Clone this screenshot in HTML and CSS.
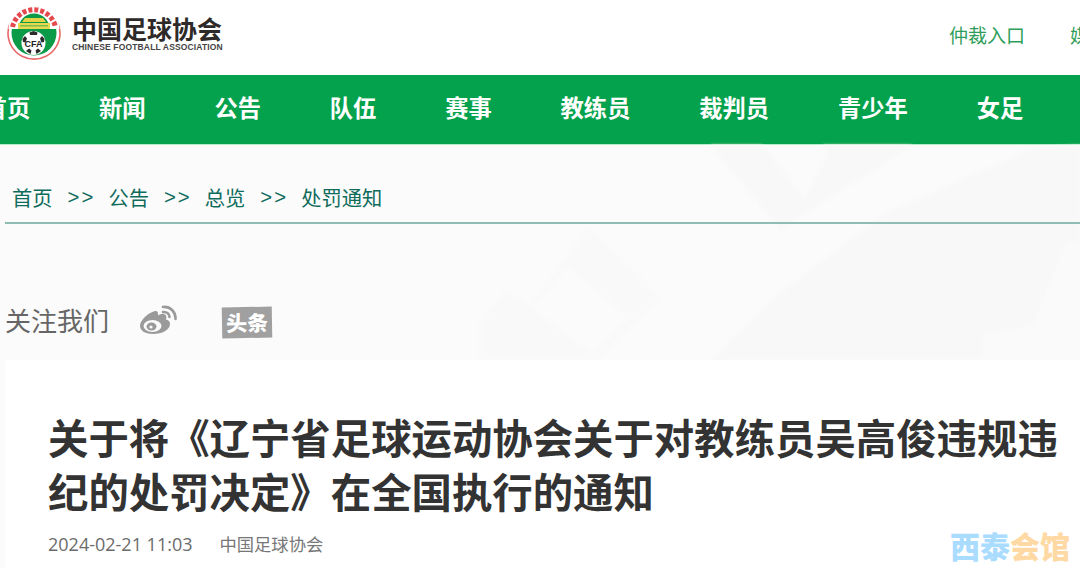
FILE: index.html
```html
<!DOCTYPE html>
<html lang="en">
<head>
  <meta charset="UTF-8">
  <title>中国足球协会</title>
  <link rel="stylesheet" href="styles.css">
</head>
<body>

  <header class="top">
    <a class="brand">
      <svg class="logo" viewBox="0 0 54 54" aria-hidden="true">
        <path d="M4 14A26 26 0 1 0 50 14" fill="none" stroke="#e9686a" stroke-width="1.600"/>
        <circle cx="27" cy="26" r="22.500" fill="#0b9a48"/>
        <path d="M6.500 22A20.500 20.500 0 0 1 47.500 22" fill="none" stroke="#fff" stroke-width="10"/>
        <path d="M5.500 20A22 22 0 0 1 48.500 20" fill="none" stroke="#e5484d" stroke-width="5" stroke-dasharray="4 2"/>
        <path d="M18 11h18l3 4H15z" fill="#e6d245"/>
        <path d="M11 16h32v6H11z" fill="#e6d84f"/>
        <path d="M13 18h28v1.500H13z" fill="#7ebc4c"/>
        <circle cx="26.500" cy="36" r="12" fill="#fff"/>
        <path d="M26.500 24l4 1.500-.5 2.500h-7l-.5-2.500zM15.500 32l2.500-3 2 2.500-1.500 4-2.500-.5zM37.500 32l-2.500-3-2 2.500 1.500 4 2.500-.5zM19 44l3-2.500 2.500 2-1 3.500zM34 44l-3-2.500-2.500 2 1 3.500z" fill="#2b2b2b"/>
        <text x="26.500" y="40" class="logo-cfa">CFA</text>
      </svg>
      <span class="brand-text">
        <span class="brand-cn">中国足球协会</span>
        <span class="brand-en">CHINESE FOOTBALL ASSOCIATION</span>
      </span>
    </a>
    <nav class="top-links">
      <a>仲裁入口</a>
      <a>媒体入口</a>
    </nav>
  </header>

  <nav class="main-nav">
    <a>首页</a>
    <a>新闻</a>
    <a>公告</a>
    <a>队伍</a>
    <a>赛事</a>
    <a>教练员</a>
    <a>裁判员</a>
    <a>青少年</a>
    <a>女足</a>
  </nav>

  <main class="content">
    <svg class="bg-shapes" viewBox="0 0 1080 423" aria-hidden="true">
      <path d="M710 215L777 150L887 67L1033 3L1080 0V215z" fill="#f8f8f8"/>
      <path d="M1067 97L1033 180L983 190L983 215H1080V97z" fill="#fafafa"/>
      <path d="M710 0L780 85L913 0H823L827 10L805 53L762 0z" fill="#f8f8f8"/>
      <path d="M588 82L662 152L597 215H480V177L505 145L530 160zM567 122L533 163L593 210L627 173z" fill="#f9f9f9" fill-rule="evenodd"/>
    </svg>

    <div class="crumbs">
      <a>首页</a><span>&gt;&gt;</span>
      <a>公告</a><span>&gt;&gt;</span>
      <a>总览</a><span>&gt;&gt;</span>
      <a>处罚通知</a>
    </div>

    <div class="follow">
      <span>关注我们</span>
      <svg class="weibo" viewBox="0 0 38 32" aria-hidden="true">
        <path d="M15 6C8 8 0 15 0 21c0 5 6 8 13 8 9 0 17-4 17-10 0-3-2-4-4-4.500 1-3 0-5-2-5.500-2-.5-4 .5-6 1.500 .5-3-.5-5-3-4.500z" fill="#9a9a9a"/>
        <ellipse cx="12.500" cy="21" rx="9" ry="6" fill="#fbfbfb"/>
        <ellipse cx="11.500" cy="21.500" rx="5" ry="4" fill="#9a9a9a"/>
        <circle cx="11" cy="22" r="1.600" fill="#fbfbfb"/>
        <path d="M23 7c4-.5 6.500 2 6.500 5M23 2c7-1 13 5 12.500 12" fill="none" stroke="#9a9a9a" stroke-width="2.600" stroke-linecap="round"/>
      </svg>
      <span class="toutiao">头条</span>
    </div>

    <article class="card">
      <h1>关于将《辽宁省足球运动协会关于对教练员吴高俊违规违纪的处罚决定》在全国执行的通知</h1>
      <div class="meta">
        <span class="meta-date">2024-02-21 11:03</span>
        <span>中国足球协会</span>
      </div>
    </article>
  </main>

  <div class="watermark"><span class="wm-blue">西泰</span><span class="wm-orange">会馆</span></div>

</body>
</html>
```

FILE: styles.css
```css
html, body {
  height: 100%;
}

body {
  margin: 0;
  background: #fff;
  font-family: "Noto Sans CJK SC", "Liberation Sans", sans-serif;
  overflow: hidden;
}

.top {
  height: 75px;
  display: flex;
  align-items: center;
  padding-left: 7px;
  background: #fff;
}

.brand {
  display: flex;
  align-items: flex-start;
  gap: 11px;
  width: 216px;
  flex-shrink: 0;
  margin-top: -7px;
}

.logo {
  width: 54px;
  height: 54px;
  flex-shrink: 0;
}

.logo-cfa {
  font: bold 9px "Liberation Sans", sans-serif;
  fill: #222;
  text-anchor: middle;
}

.brand-text {
  display: flex;
  flex-direction: column;
  margin-top: 7px;
}

.brand-cn {
  font-size: 25px;
  line-height: 28px;
  font-weight: 700;
  color: #2e2a2a;
  white-space: nowrap;
}

.brand-en {
  font: bold 8.500px/10px "Liberation Sans", sans-serif;
  letter-spacing: 0.150px;
  color: #444;
  white-space: nowrap;
}

.top-links {
  display: flex;
  gap: 45px;
  margin-left: 726px;
  padding-bottom: 6px;
  flex-shrink: 0;
  font-size: 19px;
  color: #2f9e5b;
  white-space: nowrap;
}

.main-nav {
  height: 70px;
  display: flex;
  align-items: center;
  gap: 68.800px;
  margin-left: -16.400px;
  padding-bottom: 5px;
  box-sizing: border-box;
  background: #04a24c;
  border-bottom: 1px solid #b5ecca;
  font-size: 23.300px;
  font-weight: 700;
  color: #fff;
  white-space: nowrap;
}

.content {
  position: relative;
  height: 423px;
  background: #fbfbfb;
  padding-left: 5px;
}

.bg-shapes {
  position: absolute;
  left: 0;
  top: 0;
  width: 1080px;
  height: 423px;
  filter: blur(1.500px);
}

.crumbs {
  position: relative;
  height: 79px;
  display: flex;
  align-items: center;
  gap: 15px;
  padding: 27px 0 0 7px;
  box-sizing: border-box;
  border-bottom: 2px solid #8fbdb3;
  font-size: 20.300px;
  color: #0f6b5c;
  white-space: nowrap;
}

.crumbs span {
  margin-right: -1.900px;
  letter-spacing: 2px;
  font-family: "Liberation Sans", sans-serif;
}

.follow {
  position: relative;
  height: 136px;
  display: flex;
  align-items: center;
  padding: 68px 0 14px;
  box-sizing: border-box;
  font-size: 26px;
  color: #666;
  white-space: nowrap;
}

.weibo {
  width: 38px;
  height: 32px;
  margin: 4px 0 0 31px;
}

.toutiao {
  width: 50px;
  height: 31px;
  margin: 6px 0 0 44px;
  background: #a0a0a0;
  color: #fff;
  font-size: 21px;
  font-weight: 900;
  line-height: 31px;
  text-align: center;
  transform: rotate(-1deg);
}

.card {
  position: relative;
  height: 208px;
  background: #fff;
  padding: 50px 0 0 43px;
  box-sizing: border-box;
}

.card h1 {
  margin: 0;
  font-size: 40.400px;
  line-height: 54px;
  font-weight: 700;
  color: #333;
}

.meta {
  display: flex;
  gap: 27px;
  margin-top: 13px;
  font-size: 17.300px;
  line-height: 26px;
  color: #777;
}

.meta-date {
  font-family: "Open Sans", sans-serif;
  font-size: 18px;
  color: #6b6b6b;
}

.watermark {
  position: absolute;
  right: 10px;
  bottom: 7px;
  font-size: 30px;
  line-height: 32px;
  font-weight: 900;
  white-space: nowrap;
}

.wm-blue {
  color: #a9dcff;
}

.wm-orange {
  color: #ffd9a3;
}
```
